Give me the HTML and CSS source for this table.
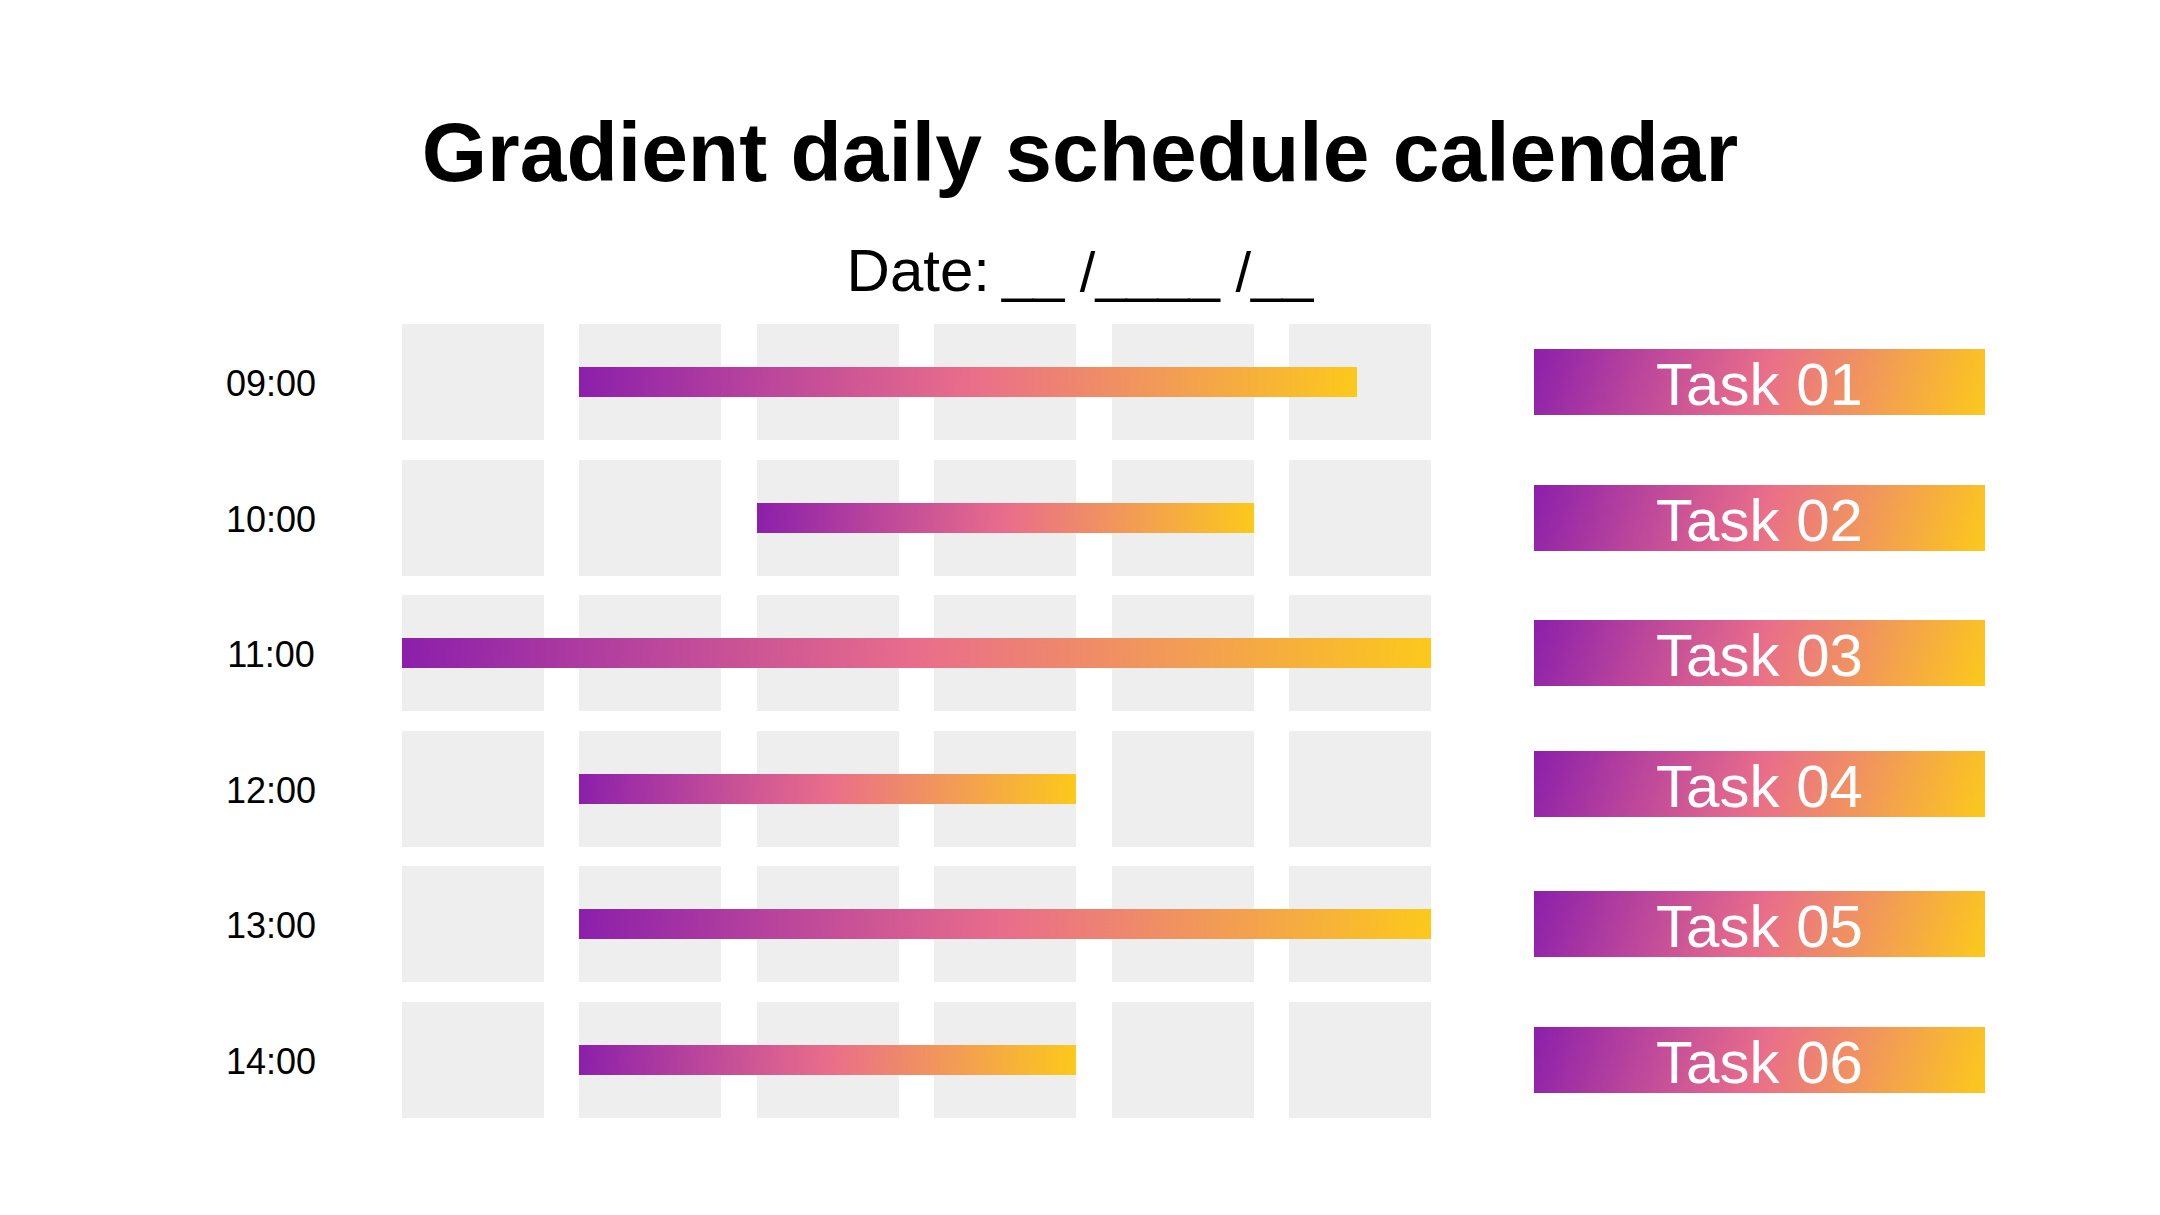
FILE: index.html
```html
<!DOCTYPE html>
<html lang="en">
<head>
<meta charset="utf-8">
<title>Gradient daily schedule calendar</title>
<link rel="stylesheet" href="styles.css">
</head>
<body>
<div class="page">
  <header class="header">
    <h1 class="title">Gradient daily schedule calendar</h1>
    <p class="date">Date:<span class="blanks">__ /____ /__</span></p>
  </header>
  <main class="schedule">
    <div class="row">
      <div class="time">09:00</div>
      <div class="track">
        <div class="cell c1"></div><div class="cell c2"></div><div class="cell c3"></div><div class="cell c4"></div><div class="cell c5"></div><div class="cell c6"></div>
        <div class="bar" style="grid-column: 2 / 7; width: 778px;"></div>
      </div>
      <div class="task">Task 01</div>
    </div>
    <div class="row">
      <div class="time">10:00</div>
      <div class="track">
        <div class="cell c1"></div><div class="cell c2"></div><div class="cell c3"></div><div class="cell c4"></div><div class="cell c5"></div><div class="cell c6"></div>
        <div class="bar" style="grid-column: 3 / 6;"></div>
      </div>
      <div class="task">Task 02</div>
    </div>
    <div class="row">
      <div class="time">11:00</div>
      <div class="track">
        <div class="cell c1"></div><div class="cell c2"></div><div class="cell c3"></div><div class="cell c4"></div><div class="cell c5"></div><div class="cell c6"></div>
        <div class="bar" style="grid-column: 1 / 7;"></div>
      </div>
      <div class="task">Task 03</div>
    </div>
    <div class="row">
      <div class="time">12:00</div>
      <div class="track">
        <div class="cell c1"></div><div class="cell c2"></div><div class="cell c3"></div><div class="cell c4"></div><div class="cell c5"></div><div class="cell c6"></div>
        <div class="bar" style="grid-column: 2 / 5;"></div>
      </div>
      <div class="task task-raised">Task 04</div>
    </div>
    <div class="row">
      <div class="time">13:00</div>
      <div class="track">
        <div class="cell c1"></div><div class="cell c2"></div><div class="cell c3"></div><div class="cell c4"></div><div class="cell c5"></div><div class="cell c6"></div>
        <div class="bar" style="grid-column: 2 / 7;"></div>
      </div>
      <div class="task">Task 05</div>
    </div>
    <div class="row">
      <div class="time">14:00</div>
      <div class="track">
        <div class="cell c1"></div><div class="cell c2"></div><div class="cell c3"></div><div class="cell c4"></div><div class="cell c5"></div><div class="cell c6"></div>
        <div class="bar" style="grid-column: 2 / 5;"></div>
      </div>
      <div class="task">Task 06</div>
    </div>
  </main>
</div>
</body>
</html>
```
FILE: styles.css
```css
* {
  box-sizing: border-box;
}

html, body {
  margin: 0;
  padding: 0;
  background: #ffffff;
}

body {
  font-family: "Liberation Sans", Arial, sans-serif;
  color: #000000;
}

.page {
  width: 2160px;
  height: 1215px;
  overflow: hidden;
  padding-top: 110px;
}

.header {
  display: flex;
  flex-direction: column;
  align-items: center;
}

.title {
  margin: 0;
  font-size: 84px;
  font-weight: 700;
  line-height: 84px;
  letter-spacing: 0;
}

.date {
  margin: 47px 0 0 0;
  font-size: 60px;
  line-height: 60px;
  font-weight: 400;
}

.blanks {
  font-size: 56px;
  margin-left: 12px;
}

.schedule {
  margin-top: 22px;
  display: flex;
  flex-direction: column;
  gap: 19.5px;
}

.row {
  display: flex;
  align-items: center;
  height: 116px;
}

.time {
  margin-left: 191px;
  width: 160px;
  padding-top: 4px;
  text-align: center;
  font-size: 36px;
  line-height: 36px;
}

.track {
  margin-left: 51px;
  width: 1029px;
  height: 116px;
  display: grid;
  grid-template-columns: repeat(6, 142px);
  grid-template-rows: 116px;
  column-gap: 35.4px;
}

.cell {
  grid-row: 1;
  background: #eeeeee;
}

.c1 { grid-column: 1; }
.c2 { grid-column: 2; }
.c3 { grid-column: 3; }
.c4 { grid-column: 4; }
.c5 { grid-column: 5; }
.c6 { grid-column: 6; }

.bar {
  grid-row: 1;
  align-self: center;
  justify-self: start;
  width: 100%;
  height: 30px;
  background: linear-gradient(92deg, #8b1fab 0%, #bc479b 25%, #e96d8b 50%, #f29b56 75%, #fcc91b 100%);
}

.task {
  margin-left: 103px;
  width: 451px;
  height: 66px;
  padding-top: 3px;
  line-height: 66px;
  text-align: center;
  font-size: 60px;
  color: #ffffff;
  background: linear-gradient(108deg, #8b1fab 0%, #bc479b 25%, #e96d8b 50%, #f29b56 75%, #fcc91b 100%);
}

.task-raised {
  margin-bottom: 10px;
}
```
